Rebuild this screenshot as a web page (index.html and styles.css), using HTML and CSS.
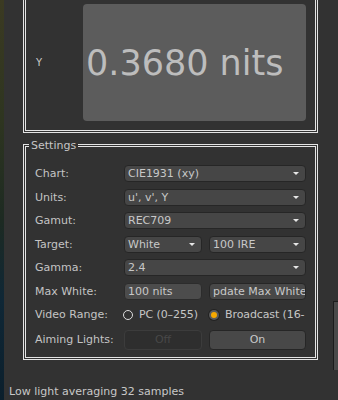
FILE: index.html
```html
<!DOCTYPE html>
<html>
<head>
<meta charset="utf-8">
<link rel="stylesheet" href="styles.css">
</head>
<body>
<div class="desk"></div>
<main class="panel">
  <section class="readout">
    <span class="axis">Y</span>
    <div class="display">0.3680 nits</div>
  </section>
  <fieldset class="settings">
    <legend>Settings</legend>
    <div class="grid">
      <span class="lbl">Chart:</span>
      <div class="select wide">CIE1931 (xy)</div>
      <span class="lbl">Units:</span>
      <div class="select wide">u', v', Y</div>
      <span class="lbl">Gamut:</span>
      <div class="select wide">REC709</div>
      <span class="lbl">Target:</span>
      <div class="select">White</div>
      <div class="select">100 IRE</div>
      <span class="lbl">Gamma:</span>
      <div class="select wide">2.4</div>
      <span class="lbl">Max White:</span>
      <div class="field">100 nits</div>
      <div class="btn left">pdate Max White</div>
      <span class="lbl">Video Range:</span>
      <label class="radio"><span class="dot"></span><span class="rtext">PC (0–255)</span></label>
      <label class="radio"><span class="dot on"></span><span class="rtext">Broadcast (16-</span></label>
      <span class="lbl">Aiming Lights:</span>
      <div class="btn off">Off</div>
      <div class="btn">On</div>
    </div>
  </fieldset>
  <p class="status">Low light averaging 32 samples</p>
  <div class="scroll"></div>
</main>
</body>
</html>
```
FILE: styles.css
```css
* { box-sizing: border-box; }
html, body { margin: 0; height: 100%; }
body {
  display: flex;
  background: #323232;
  font-family: "DejaVu Sans", Verdana, sans-serif;
  font-size: 11px;
  color: #c6c6c6;
  overflow: hidden;
}
.desk {
  width: 4px;
  flex: none;
  background: linear-gradient(180deg, #3b3a22 0%, #2e3520 30%, #1d2a22 55%, #0f2736 75%, #0b1f2c 100%);
}
.panel {
  position: relative;
  flex: 1;
  background: #323232;
  padding-left: 19px;
}
.readout {
  width: 295px;
  border: 3px double #e4e4e4;
  border-top: none;
  padding: 4px 9px 9px 9px;
  display: flex;
  align-items: center;
}
.axis {
  width: 48px;
  font-size: 10px;
  color: #c8c8c8;
  padding-left: 1px;
}
.display {
  width: 223px;
  height: 117px;
  background: #5c5c5c;
  border-radius: 4px;
  display: flex;
  align-items: center;
  padding-left: 3px;
  font-size: 35px;
  color: #bdbdbd;
  white-space: nowrap;
  overflow: hidden;
}
.settings {
  width: 295px;
  margin: 6px 0 0 0;
  border: 3px double #e4e4e4;
  padding: 13px 9px 7px 9px;
  min-inline-size: 0;
}
.settings legend {
  padding: 0 2px;
  margin-left: -6px;
  line-height: 13px;
  font-size: 11px;
  color: #c6c6c6;
}
.grid {
  display: grid;
  grid-template-columns: 82px 78px 97px;
  column-gap: 7px;
  grid-template-rows: repeat(7, 17px) 20px;
  row-gap: 6.5px;
  align-items: center;
}
.lbl { white-space: nowrap; color: #c4c4c4; }
.select, .field, .btn {
  height: 17px;
  border-radius: 4px;
  border: 1px solid #262626;
  background: #464646;
  color: #c8c8c8;
  line-height: 15px;
  padding-left: 3px;
  white-space: nowrap;
  overflow: hidden;
  position: relative;
}
.select.wide { grid-column: span 2; }
.select::after {
  content: "";
  position: absolute;
  right: 6px;
  top: 6px;
  border-left: 3px solid transparent;
  border-right: 3px solid transparent;
  border-top: 3px solid #e6e6e6;
}
.field { background: #4c4c4c; border-color: #2c2c2c; }
.btn { text-align: center; padding: 0; background: #484848; }
.btn.left { text-align: left; padding-left: 3px; }
.grid > .btn:nth-last-child(-n+2) { height: 20px; line-height: 18px; }
.btn.off { background: #2e2e2e; border-color: #3c3c3c; color: #484848; }
.radio {
  display: flex;
  align-items: center;
  white-space: nowrap;
  height: 17px;
  min-width: 0;
}
.rtext { letter-spacing: -0.1px; }
.dot {
  flex: none;
  width: 10px;
  height: 10px;
  border-radius: 50%;
  border: 1px solid #dcdcdc;
  margin: 0 6px 0 -1px;
}
.dot.on {
  border: 2px solid #5a5a5a;
  background: #f6a800;
  box-shadow: 0 0 0 1px #222;
  margin-left: 0;
}
.status {
  margin: 25px 0 0 -14px;
  line-height: 13px;
  color: #c8c8c8;
  white-space: nowrap;
}
.scroll {
  position: absolute;
  right: 0;
  top: 301px;
  width: 5px;
  height: 69px;
  background: #4a4a4a;
  border-left: 1px solid #1c1c1c;
  border-top: 1px solid #1c1c1c;
}
```
